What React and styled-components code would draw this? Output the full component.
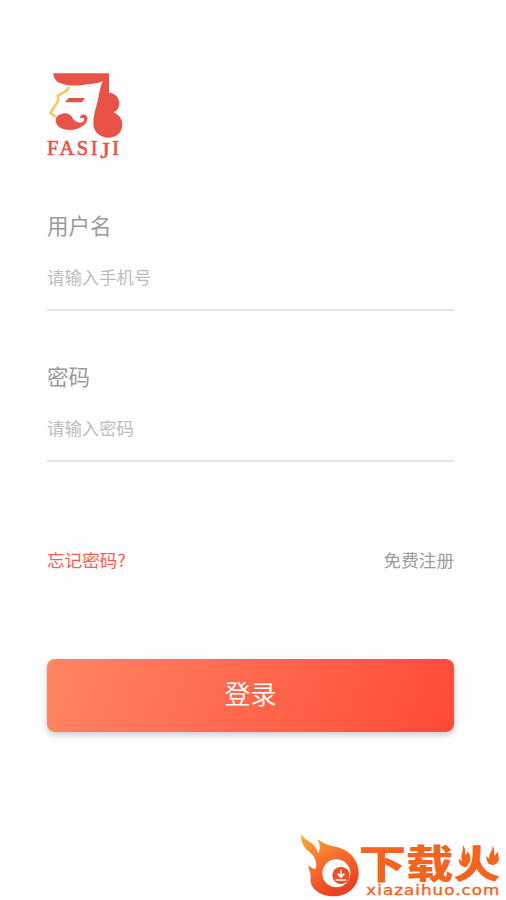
import React from 'react';
import styled, { createGlobalStyle } from 'styled-components';

const GlobalStyle = createGlobalStyle`
  * { box-sizing: border-box; }
  body { margin: 0; background: #fefefe; }
  button, input { font-family: inherit; }
`;

const Screen = styled.main`
  display: flex;
  flex-direction: column;
  width: 506px;
  height: 900px;
  padding: 62px 0 0;
  overflow: hidden;
  background: #fefefe;
  font-family: 'Noto Sans CJK SC', sans-serif;
`;

const Logo = styled.svg`
  display: block;
  flex: none;
  width: 100px;
  height: 105px;
  margin-left: 36px;
`;

const Form = styled.form`
  display: flex;
  flex-direction: column;
  width: 407px;
  margin: 42px 0 0 47px;
`;

const Field = styled.label`
  display: flex;
  flex-direction: column;
  height: 102px;
  margin-bottom: 49px;
  border-bottom: 2px solid #e5e5e5;
`;

const FieldName = styled.span`
  height: 32px;
  color: #9a9a9a;
  font-size: 21.5px;
  line-height: 32px;
  font-weight: 400;
`;

const Input = styled.input`
  width: 100%;
  height: 28px;
  margin-top: 21px;
  padding: 0;
  border: 0;
  outline: 0;
  background: transparent;
  color: #888;
  font-size: 17.4px;
  font-weight: 400;
  &::placeholder { color: #bdbdbd; opacity: 1; }
`;

const Links = styled.div`
  display: flex;
  justify-content: space-between;
  height: 28px;
  margin-top: 35px;
`;

const TextLink = styled.a`
  color: ${({ $accent }) => ($accent ? '#ff5b4d' : '#9c9c9c')};
  font-size: 17.6px;
  line-height: 28px;
  font-weight: 400;
  text-decoration: none;
`;

const SubmitButton = styled.button`
  height: 73px;
  margin-top: 85px;
  padding: 0 0 6px;
  border: 0;
  border-radius: 8px;
  background: linear-gradient(110deg, #ff8562 0%, #ff4a36 100%);
  box-shadow: 0 3px 6px rgba(0, 0, 0, 0.2);
  color: #fff;
  font-size: 26px;
  font-weight: 350;
`;

const Watermark = styled.footer`
  display: flex;
  flex: none;
  width: 216px;
  height: 75px;
  margin: 93px 0 0 290px;
`;

const WatermarkArt = styled.svg`
  display: block;
  width: 216px;
  height: 75px;
`;

function FasijiLogo() {
  return (
    <Logo viewBox="0 0 300 315" aria-label="FASIJI">
      <path fill="#e95247" d="M52 34H219V92C237 93 250 107 250 124C250 138 243 147 232 151C248 157 259 171 259 188C258 212 241 227 216 227C189 226 172 208 172 184C172 162 177 145 183 126C188 104 191 78 200 57C184 67 165 64 140 69C123 72 107 71 89 68C67 65 53 55 52 34Z" />
      <path fill="#e95247" d="M98 108H147L138 121H87Z" />
      <path fill="#e95247" d="M65 161C80 150 101 151 108 165C115 181 136 187 144 176C148 169 139 165 134 169C128 164 139 154 148 159C159 165 155 182 141 191C122 205 94 208 73 197C58 189 55 170 65 161Z" />
      <path fill="none" stroke="#fac858" strokeWidth="7.5" strokeLinejoin="round" d="M99 74L93 85L65 101L67 115L43 153L59 165" />
      <g transform="translate(33 278) scale(1.14 1.12)">
        <text fill="#e95247" stroke="#e95247" strokeWidth="1.6" fontFamily="Liberation Serif, serif" fontSize="54" textLength="190" lengthAdjust="spacing">
          FASI<tspan dy="8" fontSize="64">J</tspan><tspan dy="-8">I</tspan>
        </text>
      </g>
    </Logo>
  );
}

function SiteMark() {
  return (
    <Watermark>
      <WatermarkArt viewBox="0 0 648 225">
        <defs>
          <linearGradient id="fire" x1="0" y1="0" x2="0.45" y2="1">
            <stop offset="0" stopColor="#ffad36" />
            <stop offset="0.42" stopColor="#f87832" />
            <stop offset="1" stopColor="#ed4126" />
          </linearGradient>
        </defs>
        <path fill="url(#fire)" d="M34 27C43 47 61 45 74 64C80 72 82 80 85 85C92 70 90 55 82 43C103 56 112 60 129 64C177 72 206 103 206 144C206 185 173 214 132 214C89 214 57 188 62 158C64 142 54 136 56 120C62 128 69 132 77 131C84 113 73 94 59 81C43 69 31 51 34 27Z" />
        <circle cx="139" cy="145" r="42" fill="#fff" />
        <circle cx="153" cy="151" r="26" fill="#ee5128" />
        <path fill="none" stroke="#fff" strokeWidth="5" d="M153 134V153M143 146L153 156L163 146M137 165H168" />
        <g transform="translate(206 160) scale(1 .87)">
          <text fill="#f16521" fontFamily="Noto Sans CJK SC, sans-serif" fontWeight="900" fontSize="134" textLength="426" lengthAdjust="spacingAndGlyphs">下载火</text>
        </g>
        <path fill="#fefefe" d="M490 58H543V110L529 132H490ZM579 58H640V130H601L580 107Z" />
        <path fill="#f16521" d="M518 61C529 72 525 81 526 90L534 80C546 96 543 110 530 125C517 129 503 117 507 99C510 105 512 108 516 108C509 93 522 78 518 61ZM607 61C616 75 610 84 614 92L625 78C621 91 635 103 619 116C606 124 593 119 590 105L588 94L598 101C594 86 611 77 607 61Z" />
        <g transform="translate(229 210) scale(1.14 1)">
          <text fill="#f16521" stroke="#f16521" strokeWidth="1.1" fontFamily="DejaVu Sans, sans-serif" fontSize="44" textLength="350" lengthAdjust="spacing">xiazaihuo.com</text>
        </g>
      </WatermarkArt>
    </Watermark>
  );
}

export default function App() {
  return (
    <>
      <GlobalStyle />
      <Screen>
        <FasijiLogo />
        <Form onSubmit={(event) => event.preventDefault()}>
          <Field>
            <FieldName>用户名</FieldName>
            <Input type="text" placeholder="请输入手机号" />
          </Field>
          <Field>
            <FieldName>密码</FieldName>
            <Input type="password" placeholder="请输入密码" />
          </Field>
          <Links>
            <TextLink href="#" $accent>忘记密码?</TextLink>
            <TextLink href="#">免费注册</TextLink>
          </Links>
          <SubmitButton type="submit">登录</SubmitButton>
        </Form>
        <SiteMark />
      </Screen>
    </>
  );
}
